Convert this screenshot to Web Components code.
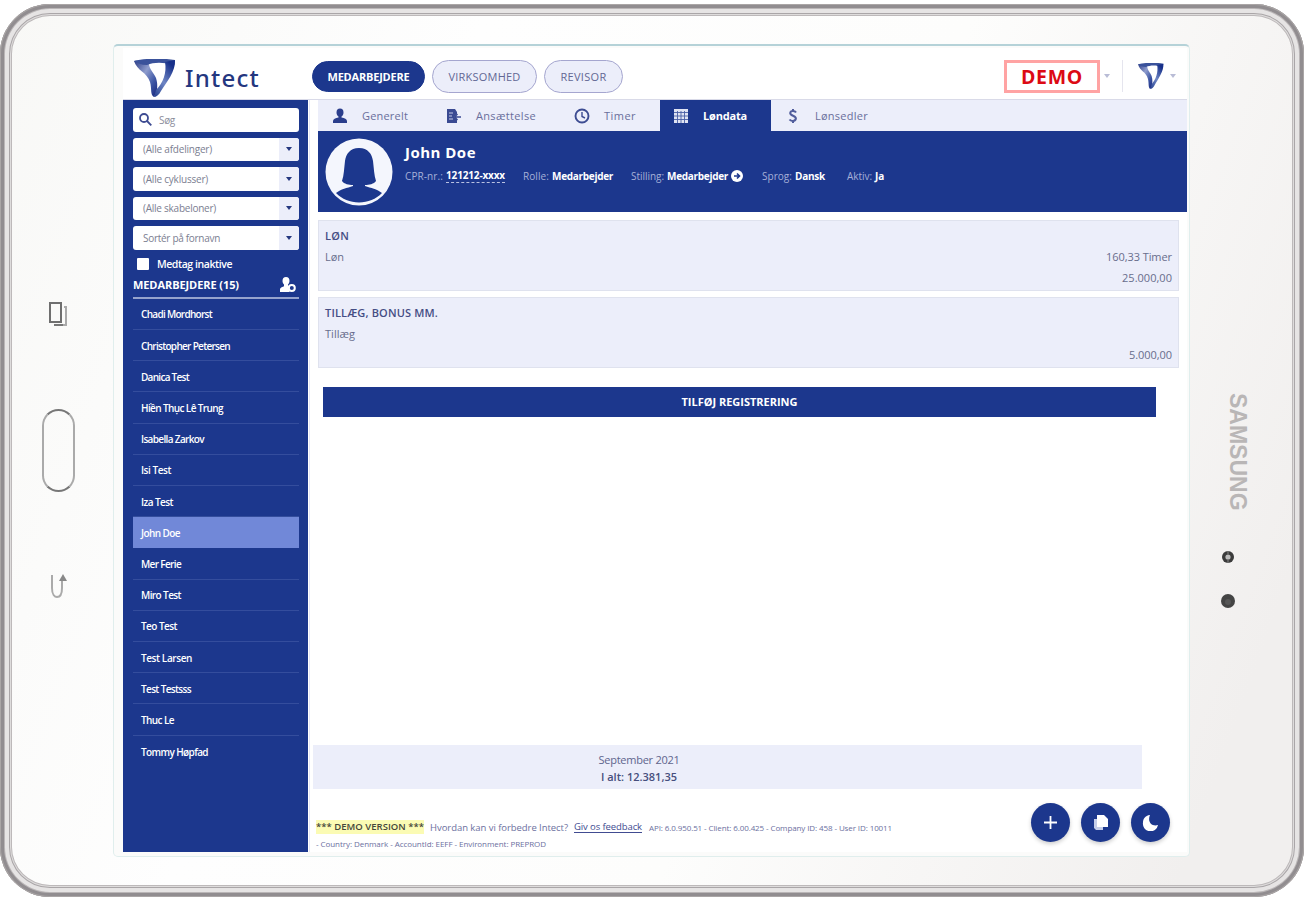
<!DOCTYPE html>
<html lang="da">
<head>
<meta charset="utf-8">
<title>Intect</title>
<style>
  html, body { margin: 0; height: 100%; overflow: hidden; background: #fff; }
  body {
    --navy: #1c378d;
    --pale: #eceefa;
    --ink: #4d5490;
    font-family: "Open Sans", "Noto Sans", sans-serif;
    font-size: 11px;
    color: var(--ink);
  }
</style>
</head>
<body>
<tablet-frame>
  <intect-app></intect-app>
</tablet-frame>

<script>
// Small base: every element gets an open root filled from its own html
class Base extends HTMLElement {
  connectedCallback() {
    if (this.shadowRoot) return;
    const template = document.createElement('template');
    template.innerHTML = this.html();
    this.attachShadow({ mode: 'open' }).appendChild(template.content.cloneNode(true));
    this.ready();
  }
  ready() {}
}

// Label that tracks its letters to a given width
class FitText extends Base {
  html() {
    return `
      <style>
        :host { display: inline-block; white-space: nowrap; flex: none; }
      </style>
      <slot></slot>`;
  }
  ready() {
    const width = Number(this.getAttribute('w'));
    const count = this.textContent.length;
    const natural = this.getBoundingClientRect().width;
    if (width && natural) {
      this.style.letterSpacing = ((width - natural) / count).toFixed(3) + 'px';
    }
  }
}

class IntectMark extends Base {
  html() {
    return `
      <style>
        :host { display: block; flex: none; }
        svg { display: block; width: 100%; height: 100%; }
      </style>
      <svg viewBox="0 0 42 38" preserveAspectRatio="none">
        <defs>
          <linearGradient id="l" x1="0" y1="0" x2="1" y2="1">
            <stop offset="0" stop-color="#2c3c85"/><stop offset=".4" stop-color="#8f9dce"/>
            <stop offset=".7" stop-color="#3f58a5"/><stop offset="1" stop-color="#14237a"/>
          </linearGradient>
          <linearGradient id="r" x1="0" y1="1" x2=".6" y2="0">
            <stop offset="0" stop-color="#24408f"/><stop offset=".5" stop-color="#6f86c4"/><stop offset="1" stop-color="#17308a"/>
          </linearGradient>
        </defs>
        <path fill="url(#l)" d="M0 2 C5 1 11 3 15 5 C15 10 20 14 22 19 C24 25 23 29 23 32 L20 38 C16 36 18 30 16 23 C13 13 3 12 0 2Z"/>
        <path fill="#3a529b" d="M0 2 C12 -1 29 -1 41 1 L40 6 C29 3 20 3 13 6 C7 6 3 4 0 2Z"/>
        <path fill="url(#r)" d="M41 1 C42 12 32 24 27 32 C25 36 22 38 20 38 L22 31 C29 24 33 14 31 3Z"/>
      </svg>`;
  }
}

// ---------- device ----------
class TabletFrame extends Base {
  html() {
    return `
      <style>
        :host { display: block; height: 900px; width: 1309px; box-sizing: border-box; padding: 4px 5px 3px 0; }
        .body {
          box-sizing: border-box; height: 893px; width: 1304px; padding: 40px 0 0 14px;
          border-radius: 50px; display: grid; grid-template-columns: 88px 1088px 1fr;
          background: linear-gradient(110deg, #f8f8f6 0%, #fefefe 30%, #fdfdfc 60%, #f1efee 92%);
          box-shadow: inset 0 0 0 1px #aaa6a6, inset 0 0 0 4px #918d90, inset 0 0 0 5px #bab6b7,
            inset 0 0 0 9px #e6e4e4, inset 0 0 0 10px #aaa6a8, inset 0 0 0 11px #dedcdc, inset 0 0 0 12px #bdb9ba;
        }
        .left, .right { display: flex; flex-direction: column; align-items: center; }
        .left { padding-top: 258px; }
        .left svg, .right svg { display: block; flex: none; }
        .home {
          box-sizing: border-box; width: 33px; height: 83px; margin: 82px 0 81px;
          border: 2px solid #aaa; border-top-color: #777; border-bottom-color: #777; border-radius: 17px;
        }
        .screen {
          box-sizing: border-box; width: 1077px; height: 813px; margin-left: 11px; padding: 3px 0 0 9px;
          border: 1px solid #e0eeed; border-top: 2px solid #b5d2d8; border-radius: 5px;
          background: #fbfbfa;
        }
        .brand {
          writing-mode: vertical-rl; margin: 349px 5px 38px 0;
          font: bold 23px/22px "Liberation Sans", sans-serif; color: #b9b6b6;
        }
        .right { align-items: flex-start; padding-left: 37px; }
        .right svg { margin-left: -6px; }
      </style>
      <div class="body">
        <div class="left">
          <svg width="18" height="25" viewBox="0 0 18 25" fill="none">
            <path d="M15 5 H17 V23 H5" stroke="#aaa" stroke-width="2"/>
            <path d="M5 23 H14" stroke="#777" stroke-width="2"/>
            <rect x="1" y="1" width="11" height="19" stroke="#6f6f6f" stroke-width="2"/>
          </svg>
          <div class="home"></div>
          <svg width="17" height="26" viewBox="0 0 17 26" fill="none" stroke="#aaa" stroke-width="2">
            <path d="M2 2 V15 C2 22 5 24 7 24 C10 24 12 21 12 15 V7"/>
            <path d="M13 1 L17 8 H9Z" fill="#888" stroke="none"/>
          </svg>
        </div>
        <div class="screen"><slot></slot></div>
        <div class="right">
          <div class="brand"><span>SAMSUNG</span></div>
          <svg width="14" height="60" viewBox="0 0 14 60">
            <circle cx="7" cy="8" r="6" fill="#3b3b3b"/><circle cx="7" cy="8" r="2.600" fill="#bbb"/>
            <path d="M7 2V5M7 11V14" stroke="#888"/>
            <circle cx="7" cy="52" r="7" fill="#444"/><circle cx="7" cy="53" r="3" fill="#565656"/>
          </svg>
        </div>
      </div>`;
  }
}

// ---------- header ----------
class NavPill extends Base {
  html() {
    return `
      <style>
        :host {
          box-sizing: border-box; display: flex; align-items: center; justify-content: center; height: 33px;
          border: 1px solid #a5a6cf; border-radius: 17px; background: var(--pale); color: #626794; font-size: 11px;
        }
        :host([active]) { height: 31px; background: var(--navy); border-color: var(--navy); color: #fff; font-weight: 700; }
      </style>
      <slot></slot>`;
  }
}

class AppHeader extends Base {
  html() {
    return `
      <style>
        :host {
          box-sizing: border-box; display: flex; align-items: center; height: 52px; padding: 5px 10px 0 11px;
          background: #fff; border-bottom: 1px solid #d9dae8;
        }
        .logo { width: 42px; height: 38px; margin-top: 4px; }
        .word { margin: 4px 0 0 9px; width: 127px; font: 500 24px/32px "Noto Sans", sans-serif; color: #24377f; }
        nav { display: flex; align-items: center; gap: 7px; flex: 1; }
        .demo {
          box-sizing: border-box; width: 96px; height: 33px; border: 3px solid #ffa3a3; color: #dc0a14;
          font-weight: 700; font-size: 19.5px; display: flex; align-items: center; justify-content: center;
        }
        .caret { width: 0; border: 3px solid transparent; border-top: 4px solid #b9bcd6; border-bottom: 0; margin: 0 1px 0 4px; }
        hr { width: 1px; height: 32px; border: 0; background: #e5e5ee; margin: 0 15px 0 11px; }
        .small { width: 26px; height: 26px; margin-right: 2px; }
      </style>
      <intect-mark class="logo"></intect-mark>
      <div class="word"><fit-text w="75">Intect</fit-text></div>
      <nav>
        <nav-pill active style="width:113px"><fit-text w="82">MEDARBEJDERE</fit-text></nav-pill>
        <nav-pill style="width:105px"><fit-text w="72">VIRKSOMHED</fit-text></nav-pill>
        <nav-pill style="width:79px"><fit-text w="46">REVISOR</fit-text></nav-pill>
      </nav>
      <div class="demo"><fit-text w="62">DEMO</fit-text></div>
      <i class="caret"></i><hr>
      <intect-mark class="small"></intect-mark>
      <i class="caret"></i>`;
  }
}

// ---------- sidebar ----------
class SelectBox extends Base {
  html() {
    return `
      <style>
        :host {
          box-sizing: border-box; display: flex; height: 23.6px; margin-bottom: 6px; border-radius: 3px; overflow: hidden;
          background: #fff; color: #7b7e91; font-size: 10px; align-items: center; padding-left: 10px;
        }
        .arrow { margin-left: auto; align-self: stretch; width: 20px; background: var(--pale); display: grid; place-items: center; }
        i { border: 3px solid transparent; border-top: 4px solid #24377f; border-bottom: 0; }
      </style>
      <slot></slot><div class="arrow"><i></i></div>`;
  }
}

class EmployeeRow extends Base {
  html() {
    return `
      <style>
        :host {
          box-sizing: border-box; display: flex; align-items: center; height: 31.2px; padding: 1px 0 0 8px;
          border-bottom: 1px solid #344d9d; font-size: 10px; font-weight: 600;
        }
        :host(:last-of-type) { border-bottom: 0; }
        :host([selected]) { background: #7188d8; border-color: #7188d8; }
      </style>
      <slot></slot>`;
  }
}

class SideBar extends Base {
  html() {
    const people = [
      ['Chadi Mordhorst', 71], ['Christopher Petersen', 89], ['Danica Test', 48], ['Hiền Thục Lê Trung', 82],
      ['Isabella Zarkov', 63], ['Isi Test', 30], ['Iza Test', 32], ['John Doe', 39], ['Mer Ferie', 40],
      ['Miro Test', 40], ['Teo Test', 36], ['Test Larsen', 51], ['Test Testsss', 50], ['Thuc Le', 33], ['Tommy Høpfad', 67],
    ];
    return `
      <style>
        :host { display: block; box-sizing: border-box; width: 185px; padding: 8px 9px 0 10px; background: var(--navy); color: #fff; }
        .search {
          display: flex; align-items: center; height: 23.5px; margin-bottom: 6px; padding-left: 6px; gap: 7px;
          background: #fff; border-radius: 3px; color: #8b8d9b; font-size: 10px;
        }
        label { display: flex; align-items: center; gap: 8px; height: 14px; margin-top: 7px; padding-left: 4px; font-size: 10.5px; font-weight: 600; }
        .box { width: 12px; height: 12px; background: #fff; border-radius: 1px; }
        h2 {
          margin: 0; height: 28px; box-sizing: border-box; display: flex; justify-content: space-between; align-items: center;
          padding: 2px 3px 0 0; border-bottom: 2px solid #96a3cd; font-size: 11px; font-weight: 700;
        }
      </style>
      <div class="search">
        <svg width="13" height="13" viewBox="0 0 13 13" fill="none" stroke="#3d4b91" stroke-width="1.800">
          <circle cx="5" cy="5" r="4"/><path d="M8 8L12.300 12.300"/>
        </svg>
        <fit-text w="16">Søg</fit-text>
      </div>
      <select-box><fit-text w="69">(Alle afdelinger)</fit-text></select-box>
      <select-box><fit-text w="65">(Alle cyklusser)</fit-text></select-box>
      <select-box><fit-text w="73">(Alle skabeloner)</fit-text></select-box>
      <select-box><fit-text w="77">Sortér på fornavn</fit-text></select-box>
      <label><span class="box"></span><fit-text w="75">Medtag inaktive</fit-text></label>
      <h2>
        <fit-text w="106">MEDARBEJDERE (15)</fit-text>
        <svg width="17" height="15" viewBox="0 0 17 15" fill="#fff">
          <path d="M3.500 4a3.500 4 0 0 1 7 0c0 2-1 3-1.500 3.600v1L11 10a4 4 0 0 0-.2 5H1v-2.500c0-2 3-2.700 4-3.300V7.600C4.500 7 3.500 6 3.500 4Z"/>
          <circle cx="12.800" cy="11" r="3" fill="none" stroke="#fff" stroke-width="2"/>
        </svg>
      </h2>
      ${people.map(([name, w]) => `<employee-row${name === 'John Doe' ? ' selected' : ''}><fit-text w="${w}">${name}</fit-text></employee-row>`).join('')}`;
  }
}

// ---------- main column ----------
class TabItem extends Base {
  html() {
    return `
      <style>
        :host { box-sizing: border-box; display: flex; align-items: center; gap: 12px; height: 31px; font-size: 11px; color: #6a6e9c; }
        :host([active]) { background: var(--navy); color: #fff; font-weight: 700; }
        ::slotted(svg) { width: 20px; height: 18px; flex: none; }
      </style>
      <slot name="icon"></slot><slot></slot>`;
  }
}

class TabBar extends Base {
  html() {
    return `
      <style>
        :host { display: flex; height: 31px; padding-left: 12px; background: var(--pale); }
      </style>
      <tab-item style="width:114px">
        <svg slot="icon" viewBox="0 0 20 18" fill="#2b3e8c"><path d="M6.500 5.500a3.500 4 0 0 1 7 0c0 2-1 3.500-2 4v1c3 .6 5.500 1.500 5.500 3.500v2H3v-2c0-2 2.500-2.900 5.500-3.500v-1c-1-.5-2-2-2-4Z"/></svg>
        <fit-text w="46">Generelt</fit-text>
      </tab-item>
      <tab-item style="width:128px">
        <svg slot="icon" viewBox="0 0 20 18"><path fill="#3a4a92" d="M3 2h8l2 3v2l-3 3 3 2v4H3Z"/><path stroke="#c5cae6" d="M5 6h4M5 9h3M5 12h4"/><path d="M17 10H11M13.500 7l-3 3 3 3" stroke="#3a4a92" stroke-width="1.500" fill="none"/></svg>
        <fit-text w="60">Ansættelse</fit-text>
      </tab-item>
      <tab-item style="width:88px">
        <svg slot="icon" viewBox="0 0 20 18" fill="none" stroke="#3d4c92" stroke-width="1.900"><circle cx="10" cy="9" r="6.500"/><path d="M10 5v4.500l3 1.500" stroke-width="1.400"/></svg>
        <fit-text w="32">Timer</fit-text>
      </tab-item>
      <tab-item active style="width:111px;padding-left:11px">
        <svg slot="icon" viewBox="0 0 20 18"><path fill="#dfe3f3" d="M3 2h14v14H3Z"/><path stroke="#4a60a6" stroke-width=".9" d="M3 5.500h14M3 9h14M3 12.500h14M6.500 4v12M10 4v12M13.500 4v12"/></svg>
        <fit-text w="44">Løndata</fit-text>
      </tab-item>
      <tab-item style="padding-left:12px">
        <svg slot="icon" viewBox="0 0 20 18" fill="none" stroke="#515d9c" stroke-width="2"><path d="M13 5.500C12 3.500 7.500 3 7.200 6 7 9 13 8.500 12.900 11.500 12.500 14.500 8 14.500 6.500 12.500M10 2v2M10 14v2"/></svg>
        <fit-text w="53">Lønsedler</fit-text>
      </tab-item>`;
  }
}

class ProfileBanner extends Base {
  html() {
    return `
      <style>
        :host { box-sizing: border-box; display: flex; height: 81px; padding: 7px 7px; gap: 12px; background: var(--navy); color: #fff; }
        .avatar { width: 68px; height: 68px; flex: none; }
        h1 { margin: 4px 0 6px; font-size: 15px; line-height: 21px; font-weight: 700; }
        dl { margin: 0; display: flex; font-size: 10px; line-height: 14px; }
        div.m { display: flex; gap: 3px; align-items: center; }
        dt { color: #a6b0d8; }
        dd { margin: 0; font-weight: 700; }
        .dash { border-bottom: 1px dashed #b9c2e2; line-height: 13px; }
      </style>
      <svg class="avatar" viewBox="0 0 68 68">
        <circle cx="34" cy="34" r="33.500" fill="#f4f6fd"/>
        <path fill="#1c378d" d="M34 10c-9 0-13 6-14 13-1 8-1 14-3 20 2 3 7 4 11 4v1c-6 2-12 3-17 7 6 6 14 9.500 23 9.500s17-3.500 23-9.500c-5-4-11-5-17-7v-1c4 0 9-1 11-4-2-6-2-12-3-20-1-7-5-13-14-13Z"/>
      </svg>
      <div>
        <h1><fit-text w="71">John Doe</fit-text></h1>
        <dl>
          <div class="m" style="width:118px"><dt><fit-text w="38">CPR-nr.:</fit-text></dt><dd class="dash"><fit-text w="59">121212-xxxx</fit-text></dd></div>
          <div class="m" style="width:108px"><dt><fit-text w="26">Rolle:</fit-text></dt><dd><fit-text w="61">Medarbejder</fit-text></dd></div>
          <div class="m" style="width:131px"><dt><fit-text w="33">Stilling:</fit-text></dt><dd><fit-text w="61">Medarbejder</fit-text></dd>
            <svg width="12" height="12" viewBox="0 0 12 12"><circle cx="6" cy="6" r="6" fill="#fff"/><path d="M3 6H8M6 3.500L8.500 6L6 8.500" stroke="#1c378d" stroke-width="1.600" fill="none"/></svg>
          </div>
          <div class="m" style="width:85px"><dt><fit-text w="30">Sprog:</fit-text></dt><dd><fit-text w="30">Dansk</fit-text></dd></div>
          <div class="m"><dt><fit-text w="25">Aktiv:</fit-text></dt><dd><fit-text w="9">Ja</fit-text></dd></div>
        </dl>
      </div>`;
  }
}

class PayCard extends Base {
  html() {
    return `
      <style>
        :host {
          box-sizing: border-box; display: block; width: 861px; height: 71px; padding: 4px 6px; margin-bottom: 6px;
          background: var(--pale); border: 1px solid #dfe2ee; font-size: 11px; line-height: 21px; color: #686d8c;
        }
        .title { font-weight: 600; color: #454d84; }
        .row { display: flex; justify-content: space-between; }
        .values { display: flex; flex-direction: column; align-items: flex-end; }
      </style>
      <div class="title"><slot name="title"></slot></div>
      <div class="row"><slot name="label"></slot><div class="values"><slot></slot></div></div>`;
  }
}

class RoundButton extends Base {
  html() {
    return `
      <style>
        :host {
          display: grid; place-items: center; width: 39px; height: 39px; border-radius: 50%;
          background: var(--navy); box-shadow: 0 2px 4px rgba(0, 0, 0, .2);
        }
      </style>
      <slot></slot>`;
  }
}

class PageFooter extends Base {
  html() {
    return `
      <style>
        :host { display: flex; justify-content: space-between; margin: 14px 17px 0 6px; }
        .text { padding-top: 16px; color: #6c70a0; }
        .line { display: flex; align-items: center; height: 16.5px; gap: 7px; font-size: 8px; }
        .big { font-size: 9.5px; }
        mark { background: #fbfbb4; color: #45463a; line-height: 14px; font-weight: 600; font-size: 9.5px; margin-right: -1px; }
        a { color: #414c91; border-bottom: 1px solid #414c91; margin-left: -1px; font-size: 9.5px; line-height: 11px; }
        .actions { display: flex; gap: 11px; }
      </style>
      <div class="text">
        <div class="line">
          <mark><fit-text w="108">*** DEMO VERSION ***</fit-text></mark>
          <fit-text class="big" w="138">Hvordan kan vi forbedre Intect?</fit-text>
          <a><fit-text w="68">Giv os feedback</fit-text></a>
          <fit-text w="243">API: 6.0.950.51 - Client: 6.00.425 - Company ID: 458 - User ID: 10011</fit-text>
        </div>
        <div class="line"><fit-text w="230">- Country: Denmark - AccountId: EEFF - Environment: PREPROD</fit-text></div>
      </div>
      <div class="actions">
        <round-button><svg width="15" height="15" viewBox="0 0 15 15"><path d="M7.500 1V14M1 7.500H14" stroke="#fff" stroke-width="1.800"/></svg></round-button>
        <round-button><svg width="16" height="17" viewBox="0 0 16 17"><path fill="#c4cde8" d="M1 5h9v11H3L1 14Z"/><path fill="#fff" d="M4 1h7l4 4v8H4Z"/></svg></round-button>
        <round-button><svg width="17" height="17" viewBox="0 0 17 17"><path fill="#fff" d="M8 1C3 1.500 1 5 1 8.500A7.500 7.500 0 0 0 16 11C10 13 5 8 8 1Z"/></svg></round-button>
      </div>`;
  }
}

class IntectApp extends Base {
  html() {
    return `
      <style>
        :host { display: block; width: 1064px; height: 804px; margin-top: -1px; background: #fff; }
        .cols { display: flex; height: 752px; }
        main { box-sizing: border-box; flex: 1; margin-left: 1px; border-left: 1px solid #e6e7f6; display: flex; flex-direction: column; }
        .top { margin-left: 8px; }
        .cards { padding: 8px 0 0 8px; }
        .add {
          box-sizing: border-box; width: 833px; height: 30px; margin: 13px 0 0 13px; background: var(--navy); color: #fff;
          display: flex; align-items: center; justify-content: center; font-size: 11px; font-weight: 700;
        }
        .sum {
          box-sizing: border-box; width: 829px; height: 45px; margin: 328px 0 0 3px; padding: 6px 177px 0 0;
          background: var(--pale); font-size: 11px; line-height: 17px; display: flex; flex-direction: column; align-items: center;
          color: #60658d;
        }
        b { font-weight: 600; color: #464e7d; }
      </style>
      <app-header></app-header>
      <div class="cols">
        <side-bar></side-bar>
        <main>
          <div class="top"><tab-bar></tab-bar><profile-banner></profile-banner></div>
          <div class="cards">
            <pay-card>
              <fit-text slot="title" w="24">LØN</fit-text>
              <fit-text slot="label" w="19">Løn</fit-text>
              <fit-text w="66">160,33 Timer</fit-text>
              <fit-text w="50">25.000,00</fit-text>
            </pay-card>
            <pay-card>
              <fit-text slot="title" w="113">TILLÆG, BONUS MM.</fit-text>
              <fit-text slot="label" w="30">Tillæg</fit-text>
              <span>&nbsp;</span>
              <fit-text w="43">5.000,00</fit-text>
            </pay-card>
          </div>
          <div class="add"><fit-text w="116">TILFØJ REGISTRERING</fit-text></div>
          <div class="sum"><fit-text w="81">September 2021</fit-text><b><fit-text w="76">I alt: 12.381,35</fit-text></b></div>
          <page-footer></page-footer>
        </main>
      </div>`;
  }
}

customElements.define('fit-text', FitText);
customElements.define('intect-mark', IntectMark);
customElements.define('nav-pill', NavPill);
customElements.define('select-box', SelectBox);
customElements.define('employee-row', EmployeeRow);
customElements.define('tab-item', TabItem);
customElements.define('pay-card', PayCard);
customElements.define('round-button', RoundButton);
customElements.define('app-header', AppHeader);
customElements.define('side-bar', SideBar);
customElements.define('tab-bar', TabBar);
customElements.define('profile-banner', ProfileBanner);
customElements.define('page-footer', PageFooter);
customElements.define('intect-app', IntectApp);
customElements.define('tablet-frame', TabletFrame);
</script>
</body>
</html>
